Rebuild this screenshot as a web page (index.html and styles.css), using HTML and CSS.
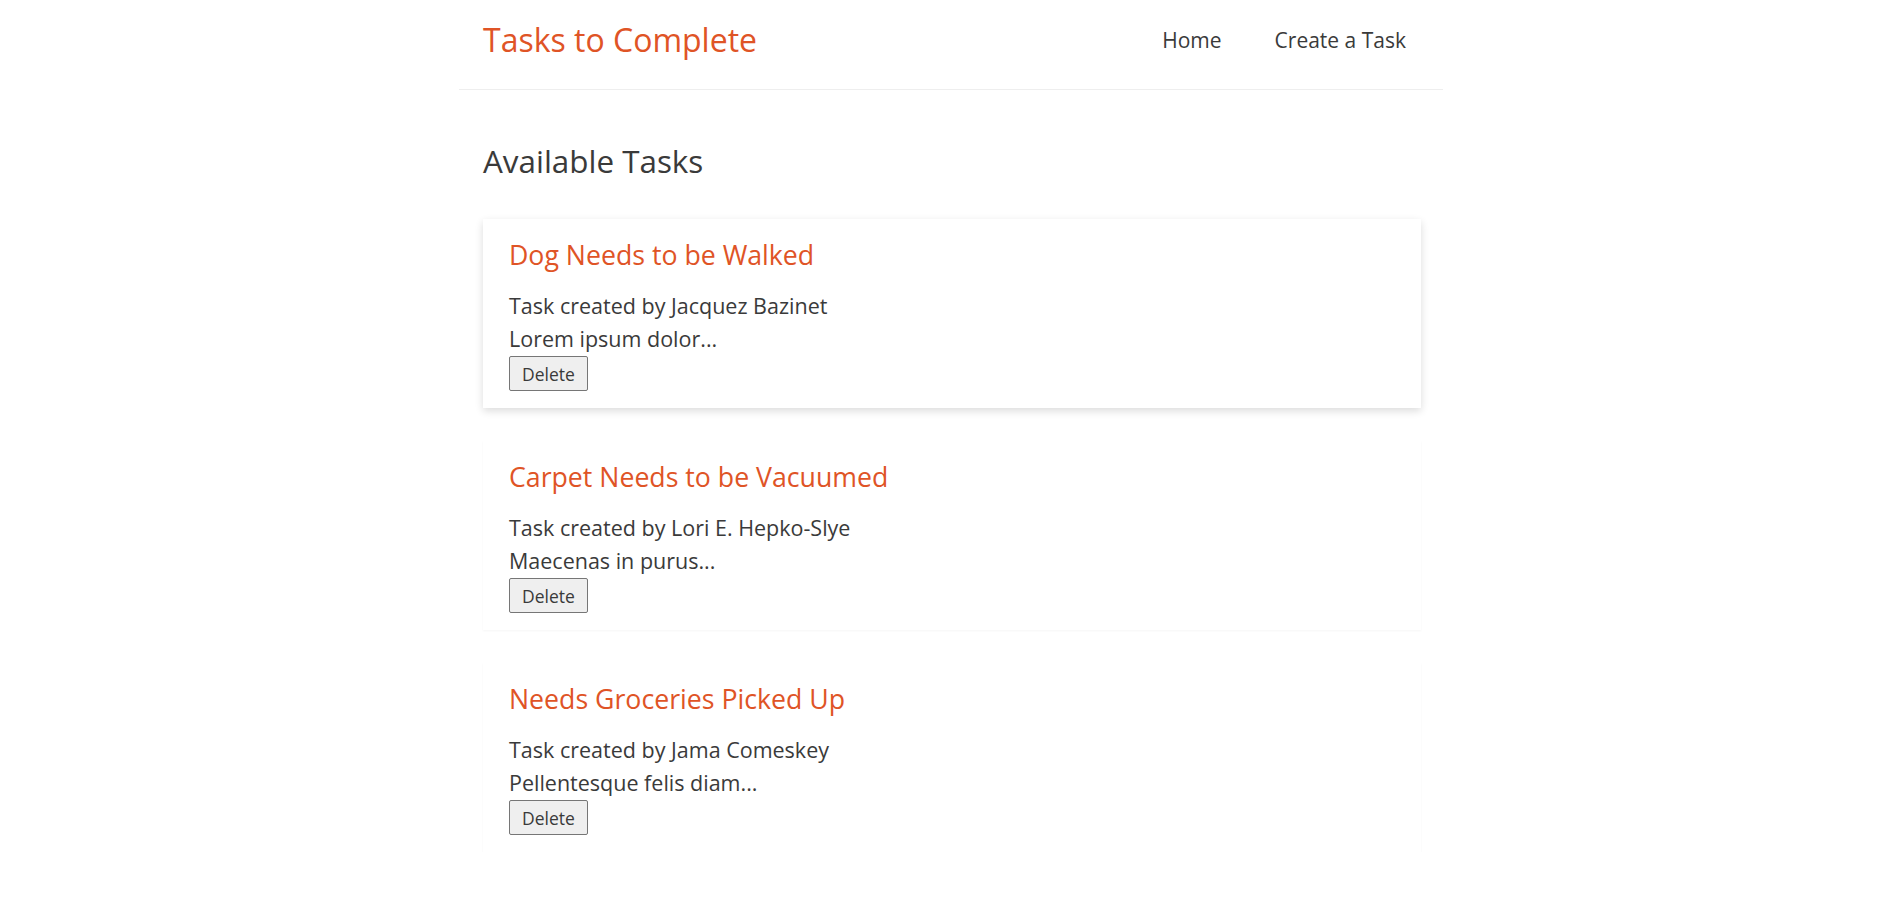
FILE: index.html
```html
<!DOCTYPE html>
<html lang="en">
<head>
<meta charset="utf-8">
<title>Tasks to Complete</title>
<link rel="stylesheet" href="styles.css">
</head>
<body>
<header class="navbar">
  <div class="navbar-inner">
    <a class="brand" href="#">Tasks to Complete</a>
    <nav class="nav">
      <a class="nav-link" href="#">Home</a>
      <a class="nav-link" href="#">Create a Task</a>
    </nav>
  </div>
</header>
<main class="container">
  <h1 class="page-title">Available Tasks</h1>
  <div class="task-list">
    <article class="task-card task-card-active">
      <h2 class="task-title">Dog Needs to be Walked</h2>
      <p class="task-line">Task created by Jacquez Bazinet</p>
      <p class="task-line">Lorem ipsum dolor...</p>
      <button class="btn-delete">Delete</button>
    </article>
    <article class="task-card">
      <h2 class="task-title">Carpet Needs to be Vacuumed</h2>
      <p class="task-line">Task created by Lori E. Hepko-Slye</p>
      <p class="task-line">Maecenas in purus...</p>
      <button class="btn-delete">Delete</button>
    </article>
    <article class="task-card">
      <h2 class="task-title">Needs Groceries Picked Up</h2>
      <p class="task-line">Task created by Jama Comeskey</p>
      <p class="task-line">Pellentesque felis diam...</p>
      <button class="btn-delete">Delete</button>
    </article>
  </div>
</main>
</body>
</html>
```
FILE: styles.css
```css
* { box-sizing: border-box; }
html, body { margin: 0; padding: 0; background: #fff; }
body {
  font-family: "Open Sans", "Noto Sans", sans-serif;
  color: #3a3a3a;
}
.navbar {
  width: 984px;
  margin: 0 auto;
  border-bottom: 1px solid #eeeeee;
}
.navbar-inner {
  height: 89px;
  padding: 0 37px 8px 24px;
  display: flex;
  align-items: center;
  justify-content: space-between;
}
.brand {
  color: #df5426;
  font-size: 32px;
  text-decoration: none;
  line-height: 1;
  margin-top: -2px;
}
.nav { display: flex; gap: 53px; }
.nav-link {
  color: #3a3a3a;
  font-size: 21px;
  text-decoration: none;
  line-height: 1;
}
.container {
  width: 984px;
  margin: 0 auto;
  padding: 0 22px 0 24px;
}
.page-title {
  font-size: 31.4px;
  font-weight: 400;
  margin: 0;
  padding-top: 51px;
  line-height: 40px;
  color: #3a3a3a;
}
.task-list {
  margin-top: 38px;
  display: flex;
  flex-direction: column;
  gap: 33px;
}
.task-card {
  height: 189px;
  padding: 20px 26px 17px 26px;
  background: #fff;
  box-shadow: 0 1px 2px rgba(0, 0, 0, 0.04);
}
.task-card-active {
  box-shadow: 0 3px 8px rgba(0, 0, 0, 0.14);
}
.task-title {
  color: #df5426;
  font-size: 26.7px;
  font-weight: 400;
  line-height: 32px;
  margin: 0 0 18px 0;
}
.task-line {
  font-size: 21.5px;
  line-height: 33px;
  margin: 0;
}
.btn-delete {
  display: block;
  margin-top: 1px;
  width: 79px;
  height: 35px;
  font-family: inherit;
  font-size: 17.5px;
  color: #3a3a3a;
  background: #efefef;
  border: 1px solid #767676;
  border-radius: 2px;
  padding: 0;
  cursor: pointer;
}
```
